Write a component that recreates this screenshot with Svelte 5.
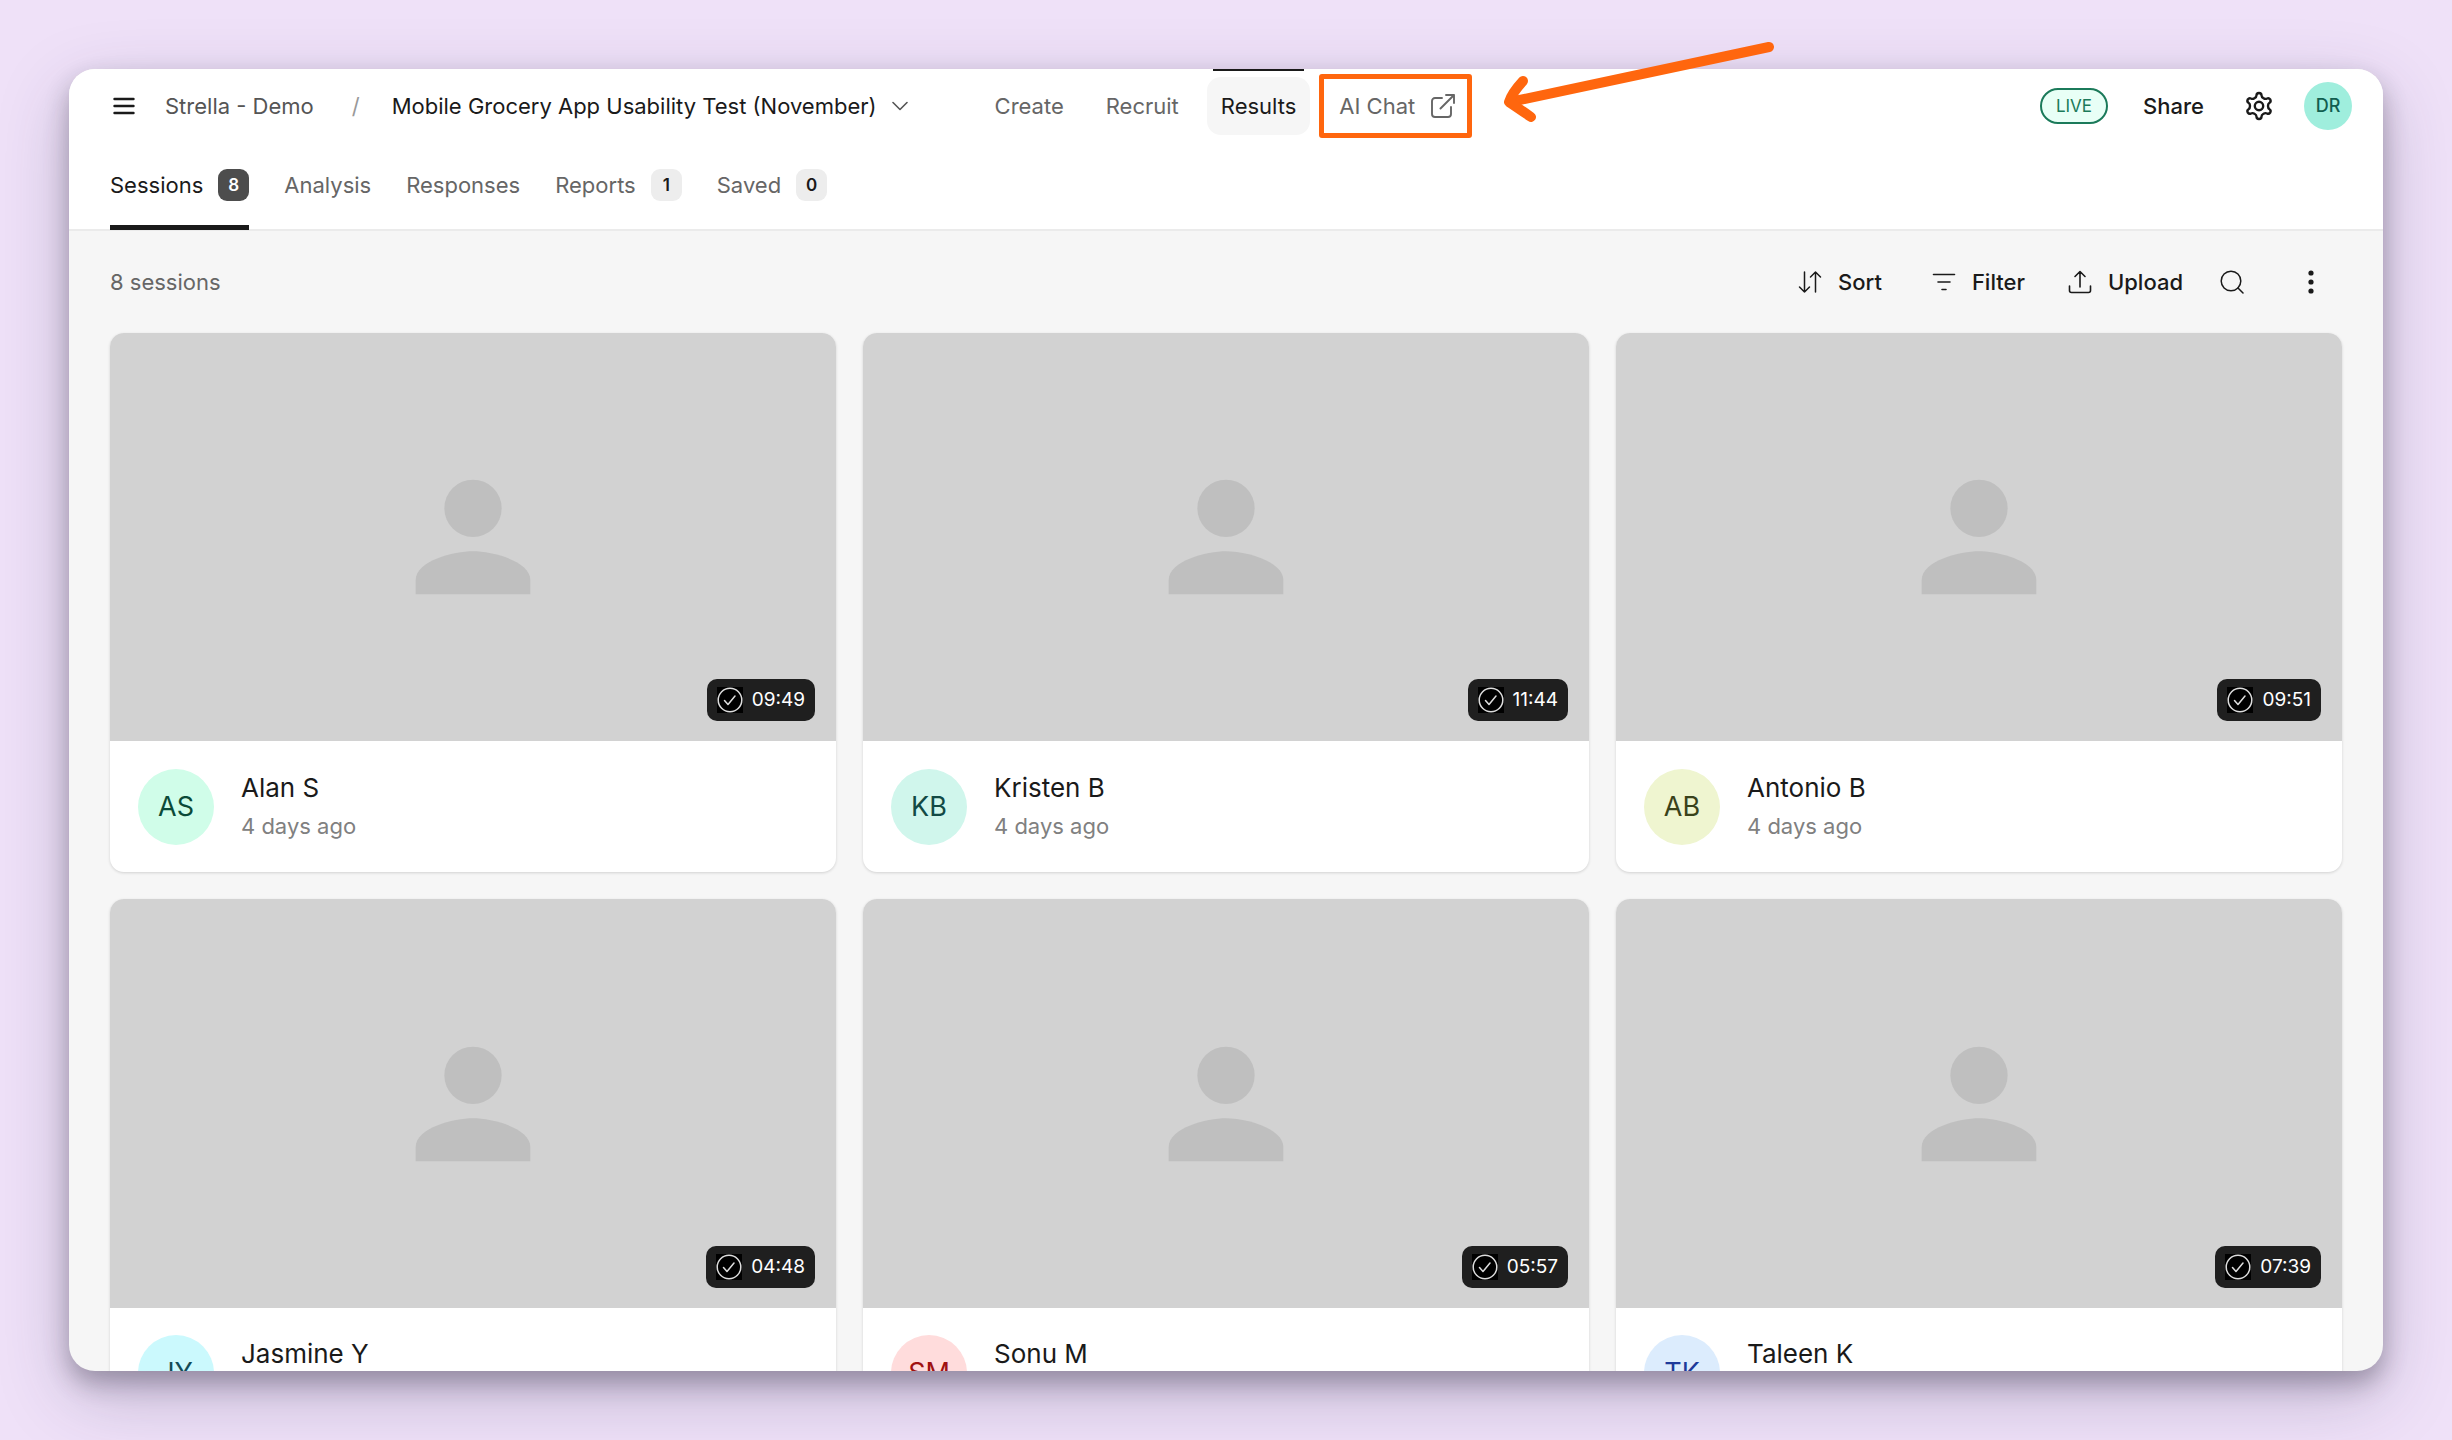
<script lang="ts">
	interface Session {
		name: string;
		initials: string;
		duration: string;
		when: string;
		tone: string;
	}

	const tabs = [
		{ label: 'Sessions', count: 8 },
		{ label: 'Analysis' },
		{ label: 'Responses' },
		{ label: 'Reports', count: 1 },
		{ label: 'Saved', count: 0 }
	];

	const sessions: Session[] = [
		{ name: 'Alan S', initials: 'AS', duration: '09:49', when: '4 days ago', tone: 'mint' },
		{ name: 'Kristen B', initials: 'KB', duration: '11:44', when: '4 days ago', tone: 'teal' },
		{ name: 'Antonio B', initials: 'AB', duration: '09:51', when: '4 days ago', tone: 'lime' },
		{ name: 'Jasmine Y', initials: 'JY', duration: '04:48', when: '4 days ago', tone: 'cyan' },
		{ name: 'Sonu M', initials: 'SM', duration: '05:57', when: '4 days ago', tone: 'red' },
		{ name: 'Taleen K', initials: 'TK', duration: '07:39', when: '4 days ago', tone: 'blue' }
	];

	let activeTab = $state('Sessions');

	// Outline of the six-tooth settings cog, centred on 0,0
	function cogPath() {
		const at = (deg: number, r: number) => {
			const a = (deg * Math.PI) / 180;
			return `${(r * Math.sin(a)).toFixed(2)} ${(-r * Math.cos(a)).toFixed(2)}`;
		};
		let d = `M${at(-30, 9)}`;
		for (let t = 0; t < 360; t += 60) {
			d += `Q${at(t - 16, 9.2)} ${at(t - 13, 11)}Q${at(t - 11, 13)} ${at(t, 13)}`;
			d += `Q${at(t + 11, 13)} ${at(t + 13, 11)}Q${at(t + 16, 9.2)} ${at(t + 30, 9)}`;
		}
		return d + 'Z';
	}
</script>

<div class="page">
	<div class="window">
		<header>
			<div class="topbar">
				<button aria-label="Menu">
					<svg width="22" height="18" viewBox="0 0 22 18" stroke="currentColor" stroke-width="2.4" stroke-linecap="round">
						<path d="M1.5 2h19M1.5 9h19M1.5 16h19" />
					</svg>
				</button>
				<a class="workspace" href="#workspace">Strella - Demo</a>
				<span class="slash">/</span>
				<button class="study">
					Mobile Grocery App Usability Test (November)
					<svg width="16" height="10" viewBox="0 0 16 10" fill="none" stroke="#555" stroke-width="1.6" stroke-linecap="round" stroke-linejoin="round">
						<path d="M1 1.5l7 7 7-7" />
					</svg>
				</button>
				<nav class="steps">
					<a href="#create">Create</a>
					<a href="#recruit">Recruit</a>
					<a class="current" href="#results">Results</a>
					<a class="chat" href="#chat">
						AI Chat
						<svg width="24" height="24" viewBox="0 0 24 24" fill="none" stroke="currentColor" stroke-width="1.9" stroke-linecap="round" stroke-linejoin="round">
							<path d="M11 4H4a3 3 0 0 0-3 3v13a3 3 0 0 0 3 3h13a3 3 0 0 0 3-3v-7" />
							<path d="M9.5 14.5L23 1M15 1h8v8" />
						</svg>
						<svg class="arrow" width="280" height="90" viewBox="0 0 280 90" fill="none" stroke="#ff660e" stroke-width="10" stroke-linecap="round" stroke-linejoin="round">
							<path d="M269 6L10 61" />
							<path d="M23 40Q12 52 9 61Q18 67 31 76" />
						</svg>
					</a>
				</nav>
				<div class="account">
					<span class="live">LIVE</span>
					<button class="share">Share</button>
					<button aria-label="Settings">
						<svg width="30" height="30" viewBox="-15 -15 30 30" fill="none" stroke="currentColor" stroke-width="2.4" stroke-linejoin="round">
							<path d={cogPath()} />
							<circle r="4.2" />
						</svg>
					</button>
					<button class="user" aria-label="Account">DR</button>
				</div>
			</div>

			<nav class="tabs">
				{#each tabs as tab}
					<button class="tab" class:active={activeTab === tab.label} onclick={() => (activeTab = tab.label)}>
						{tab.label}
						{#if tab.count !== undefined}
							<span class="count">{tab.count}</span>
						{/if}
					</button>
				{/each}
			</nav>
		</header>

		<main>
			<div class="toolbar">
				<p>8 sessions</p>
				<div class="tools">
					<button class="sort">
						<svg width="24" height="24" viewBox="0 0 24 24" fill="none" stroke="currentColor" stroke-width="1.5" stroke-linecap="round" stroke-linejoin="round">
							<path d="M6.5 2v20M1.5 17l5 5 5-5M17.5 22V2M12.5 7l5-5 5 5" />
						</svg>
						Sort
					</button>
					<button class="filter">
						<svg width="24" height="24" viewBox="0 0 24 24" fill="none" stroke="currentColor" stroke-width="1.6" stroke-linecap="round">
							<path d="M1.5 4.5h21M6 12h12M10 19.5h4" />
						</svg>
						Filter
					</button>
					<button class="upload">
						<svg width="24" height="24" viewBox="0 0 24 24" fill="none" stroke="currentColor" stroke-width="1.6" stroke-linecap="round" stroke-linejoin="round">
							<path d="M12 17V1.5M7 6.5l5-5 5 5M1.5 16v4.5a2 2 0 0 0 2 2h17a2 2 0 0 0 2-2V16" />
						</svg>
						Upload
					</button>
					<button class="search" aria-label="Search">
						<svg width="24" height="24" viewBox="0 0 24 24" fill="none" stroke="currentColor" stroke-width="1.5" stroke-linecap="round">
							<circle cx="11" cy="11" r="9.8" />
							<path d="M18 18l5 5" />
						</svg>
					</button>
					<button class="more" aria-label="More options">
						<svg width="6" height="24" viewBox="0 0 6 24" fill="currentColor">
							<circle cx="3" cy="3" r="2.6" />
							<circle cx="3" cy="12" r="2.6" />
							<circle cx="3" cy="21" r="2.6" />
						</svg>
					</button>
				</div>
			</div>

			<div class="grid">
				{#each sessions as session}
					<article class="card">
						<div class="thumb">
							<svg width="172" height="172" viewBox="0 0 24 24" fill="#bfbfbf">
								<circle cx="12" cy="8" r="4" />
								<path d="M12 14c-2.67 0-8 1.34-8 4v2h16v-2c0-2.66-5.33-4-8-4z" />
							</svg>
							<span class="duration">
								<svg width="26" height="26" viewBox="0 0 26 26" fill="none" stroke="#ddd" stroke-width="1.5" stroke-linecap="round" stroke-linejoin="round">
									<rect width="26" height="26" fill="#000" stroke="none" />
									<circle cx="13" cy="13" r="11.8" />
									<path d="M7.5 13.5l3.5 4 7-8.5" />
								</svg>
								{session.duration}
							</span>
						</div>
						<div class="person">
							<span class="avatar {session.tone}">{session.initials}</span>
							<div>
								<h2>{session.name}</h2>
								<p>{session.when}</p>
							</div>
						</div>
					</article>
				{/each}
			</div>
		</main>
	</div>
</div>

<style>
	:global(body) {
		margin: 0;
		background: #efe1f8;
	}

	.page {
		box-sizing: border-box;
		height: 100vh;
		padding: 69px;
		overflow: hidden;
		font-family: Inter, sans-serif;
		font-size: 22px;
		line-height: 32px;
		color: #1a1a1a;
	}

	.window {
		display: flex;
		flex-direction: column;
		height: 100%;
		border-radius: 26px;
		background: #f6f6f6;
		box-shadow:
			0 12px 24px rgba(30, 25, 40, 0.3),
			0 24px 70px rgba(50, 45, 90, 0.26);
	}

	button {
		padding: 0;
		border: 0;
		background: none;
		font: inherit;
		color: inherit;
		cursor: pointer;
	}

	a {
		color: inherit;
		text-decoration: none;
	}

	svg {
		display: block;
		flex: none;
	}

	p,
	h2 {
		margin: 0;
	}

	header {
		border-radius: 26px 26px 0 0;
		background: #fff;
		border-bottom: 2px solid #ebebeb;
	}

	.topbar {
		display: flex;
		align-items: center;
		height: 74px;
		padding: 0 31px 0 44px;
		white-space: nowrap;
	}

	.workspace {
		margin-left: 30px;
		color: #555;
	}

	.slash {
		margin: 0 32px 0 38px;
		color: #999;
	}

	.study {
		display: flex;
		align-items: center;
		gap: 15px;
	}

	.steps {
		display: flex;
		align-items: center;
		margin-left: 73px;
		color: #666;
	}

	.steps a {
		position: relative;
		padding: 13px 14px;
		margin-right: 14px;
	}

	.steps .current {
		margin-right: 9px;
		border-radius: 14px;
		background: #f6f6f6;
		color: #1a1a1a;
	}

	.steps .current::before {
		content: '';
		position: absolute;
		top: -8px;
		left: 6px;
		right: 6px;
		height: 2px;
		background: #1a1a1a;
	}

	.steps .chat {
		display: flex;
		align-items: center;
		gap: 16px;
		padding: 11px 12px 11px 15px;
		border: 5px solid #ff660e;
		border-radius: 3px;
	}

	/* callout pointing at the chat link */
	.arrow {
		position: absolute;
		left: 176px;
		top: -38px;
	}

	.account {
		display: flex;
		align-items: center;
		margin-left: auto;
	}

	.live {
		padding: 0 14px;
		border: 2px solid #1b7a5a;
		border-radius: 20px;
		background: #e8fff6;
		font-size: 17px;
		color: #1b7a5a;
	}

	.share {
		margin: 0 40px 0 35px;
		font-weight: 500;
	}

	.user {
		width: 48px;
		height: 48px;
		margin-left: 30px;
		border-radius: 50%;
		background: #9feedd;
		font-size: 18px;
		font-weight: 500;
		color: #115e50;
	}

	.tabs {
		display: flex;
		gap: 35px;
		padding: 0 41px;
		margin-bottom: -1px;
	}

	.tab {
		display: flex;
		align-items: center;
		gap: 15px;
		height: 87px;
		padding-top: 2px;
		border-bottom: 5px solid transparent;
		color: #666;
	}

	.tab.active {
		border-color: #1a1a1a;
		color: #1a1a1a;
	}

	.count {
		width: 31px;
		border-radius: 9px;
		background: #ededed;
		font-size: 17px;
		font-weight: 600;
		color: #1a1a1a;
	}

	.active .count {
		background: #4d4d4d;
		color: #fff;
	}

	main {
		flex: 1;
		min-height: 0;
		padding: 27px 41px;
		overflow: clip;
		border-radius: 0 0 26px 26px;
	}

	.toolbar {
		display: flex;
		align-items: center;
		justify-content: space-between;
		height: 48px;
		margin-bottom: 27px;
		color: #666;
	}

	.tools {
		display: flex;
		align-items: center;
		color: #1a1a1a;
	}

	.tools button {
		display: flex;
		align-items: center;
		gap: 16px;
		font-weight: 500;
	}

	.tools .filter {
		margin: 0 43px 0 50px;
	}

	.tools .search {
		margin: 0 64px 0 37px;
	}

	.tools .more {
		margin-right: 28px;
	}

	.grid {
		display: grid;
		grid-template-columns: repeat(3, 1fr);
		gap: 27px;
	}

	.card {
		overflow: hidden;
		border-radius: 14px;
		background: #fff;
		box-shadow: 0 1px 3px rgba(0, 0, 0, 0.15);
	}

	.thumb {
		position: relative;
		display: flex;
		align-items: center;
		justify-content: center;
		aspect-ratio: 16 / 9;
		background: #d2d2d2;
	}

	.duration {
		position: absolute;
		right: 21px;
		bottom: 20px;
		display: flex;
		align-items: center;
		gap: 9px;
		height: 42px;
		padding: 0 10px;
		border-radius: 10px;
		background: #1f1f1f;
		font-size: 19px;
		color: #fff;
	}

	.person {
		display: flex;
		align-items: center;
		gap: 27px;
		height: 131px;
		padding: 0 28px;
	}

	.avatar {
		width: 76px;
		border-radius: 50%;
		font-size: 27px;
		line-height: 76px;
		text-align: center;
	}

	.mint {
		background: #d0fde9;
		color: #0b4a38;
	}

	.teal {
		background: #d0f6ec;
		color: #124a45;
	}

	.lime {
		background: #eff5d0;
		color: #39421a;
	}

	.cyan {
		background: #cbf9fd;
		color: #134b57;
	}

	.red {
		background: #ffdcdc;
		color: #a01212;
	}

	.blue {
		background: #dcecfd;
		color: #1e3a9a;
	}

	h2 {
		font-size: 26px;
		font-weight: 400;
		line-height: 38px;
	}

	.person p {
		line-height: 38px;
		color: #808080;
	}
</style>
